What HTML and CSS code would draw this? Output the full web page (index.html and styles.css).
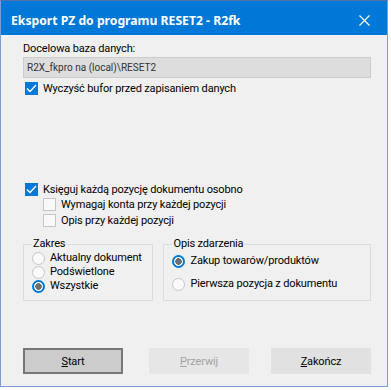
FILE: index.html
```html
<!DOCTYPE html>
<html lang="pl">

<head>
    <meta charset="UTF-8">
    <meta name="viewport" content="width=device-width, initial-scale=1.0">
    <title>Eksport PZ do programu RESET2 - R2fk</title>
    <link rel="stylesheet" href="styles.css">
</head>

<body>
    <div class="window">
        <div class="titlebar">
            <span class="title">Eksport PZ do programu RESET2 - R2fk</span>
            <svg class="close" width="11" height="11" viewBox="0 0 11 11">
                <path d="M0.5 0.5 L10.5 10.5 M10.5 0.5 L0.5 10.5" stroke="#fff" stroke-width="1.2" fill="none" />
            </svg>
        </div>

        <div class="content">
            <div class="label">Docelowa baza danych:</div>
            <div class="field">R2X_fkpro na (local)\RESET2</div>

            <div class="check-row first">
                <span class="box checked">
                    <svg width="13" height="13" viewBox="0 0 13 13"><path d="M2 6.5 L5 9.5 L11 3" stroke="#fff" stroke-width="1.3" fill="none" /></svg>
                </span>
                Wyczyść bufor przed zapisaniem danych
            </div>

            <div class="options">
                <div class="check-row">
                    <span class="box checked">
                        <svg width="13" height="13" viewBox="0 0 13 13"><path d="M2 6.5 L5 9.5 L11 3" stroke="#fff" stroke-width="1.3" fill="none" /></svg>
                    </span>
                    Księguj każdą pozycję dokumentu osobno
                </div>
                <div class="check-row sub">
                    <span class="box"></span>
                    Wymagaj konta przy każdej pozycji
                </div>
                <div class="check-row sub last">
                    <span class="box"></span>
                    Opis przy każdej pozycji
                </div>
            </div>

            <div class="groups">
                <div class="group zakres">
                    <span class="legend">Zakres</span>
                    <div class="radio-row"><span class="radio"></span>Aktualny dokument</div>
                    <div class="radio-row"><span class="radio"></span>Podświetlone</div>
                    <div class="radio-row"><span class="radio on"></span>Wszystkie</div>
                </div>
                <div class="group opis">
                    <span class="legend">Opis zdarzenia</span>
                    <div class="radio-row"><span class="radio on"></span>Zakup towarów/produktów</div>
                    <div class="radio-row second"><span class="radio"></span>Pierwsza pozycja z dokumentu</div>
                </div>
            </div>

            <div class="buttons">
                <button class="btn default"><u>S</u>tart</button>
                <button class="btn disabled"><u>P</u>rzerwij</button>
                <button class="btn"><u>Z</u>akończ</button>
            </div>
        </div>
    </div>
</body>

</html>
```

FILE: styles.css
```css
:root {
    --title-blue: #0078d7;
    --face-color: #f0f0f0;
    --frame-color: #7d9fd6;
    --line-color: #dcdcdc;
    --ui-font: Roboto, 'Noto Sans', sans-serif;
    --title-font: 'Noto Sans', sans-serif;
}

body {
    margin: 0;
    background: #ffffff;
    font-family: var(--ui-font);
    font-size: 11px;
    letter-spacing: -0.15px;
    color: #000000;
}

.window {
    width: 388px;
    height: 387px;
    box-sizing: border-box;
    border: 1px solid var(--frame-color);
    border-top-color: #4f6fa5;
    background-color: var(--face-color);
}

.titlebar {
    height: 34px;
    background-color: var(--title-blue);
    display: flex;
    align-items: flex-start;
    justify-content: space-between;
    padding: 12px 0 0 10px;
    box-sizing: border-box;
}

.title {
    color: #ffffff;
    font-family: var(--title-font);
    font-weight: bold;
    font-size: 12.2px;
    letter-spacing: 0;
    line-height: 16px;
}

.close {
    margin: 2px 17px 0 0;
}

.content {
    padding: 6px 16px 0 22px;
}

.label {
    line-height: 15px;
}

.field {
    margin-top: 1px;
    height: 21px;
    box-sizing: border-box;
    border: 1px solid #cccccc;
    background-color: #dddddd;
    padding: 0 3px;
    font-size: 10px;
    letter-spacing: 0;
    line-height: 19px;
    color: #333333;
}

.check-row {
    display: flex;
    align-items: center;
    gap: 5px;
    height: 15px;
    line-height: 15px;
    padding-left: 2px;
    white-space: nowrap;
}

.check-row.first {
    margin-top: 3px;
}

.check-row.sub {
    padding-left: 20px;
}

.check-row.last {
    margin-top: 1px;
}

.options {
    margin-top: 86px;
}

.box {
    width: 13px;
    height: 13px;
    box-sizing: border-box;
    border: 1px solid #c6c6c6;
    background-color: #f9f9f9;
    flex-shrink: 0;
}

.box.checked {
    border: none;
    background-color: var(--title-blue);
}

.box svg {
    display: block;
}

.groups {
    display: flex;
    gap: 10px;
    margin-top: 16px;
}

.group {
    position: relative;
    height: 57px;
    box-sizing: border-box;
    border: 1px solid var(--line-color);
    padding-left: 8px;
}

.zakres {
    width: 132px;
    padding-top: 6px;
}

.opis {
    width: 210px;
    padding-top: 9px;
}

.legend {
    position: absolute;
    top: -8px;
    left: 8px;
    padding: 0 1px;
    line-height: 14px;
    background-color: var(--face-color);
}

.radio-row {
    display: flex;
    align-items: center;
    gap: 5px;
    height: 14px;
    line-height: 14px;
    white-space: nowrap;
}

.radio-row.second {
    margin-top: 9px;
}

.radio {
    width: 13px;
    height: 13px;
    box-sizing: border-box;
    border-radius: 50%;
    border: 1px solid #c6c6c6;
    background-color: #fafafa;
    flex-shrink: 0;
}

.radio.on {
    border: 2px solid var(--title-blue);
    background: radial-gradient(circle, #6e6e6e 0 3px, #ffffff 3.6px);
}

.buttons {
    display: flex;
    margin-top: 47px;
}

.btn {
    width: 100px;
    height: 26px;
    box-sizing: border-box;
    border: 1px solid #e1e1e1;
    background-color: #e1e1e1;
    font-family: inherit;
    font-size: 11px;
    letter-spacing: -0.15px;
    color: #000000;
    padding: 0;
    margin-left: 22px;
}

.btn.default {
    margin-left: 0;
    border: 2px solid #777777;
    background-color: #cccccc;
}

.btn.disabled {
    margin-left: 26px;
    border-color: #e6e6e6;
    background-color: #e6e6e6;
    color: #a3a3a3;
}
```
